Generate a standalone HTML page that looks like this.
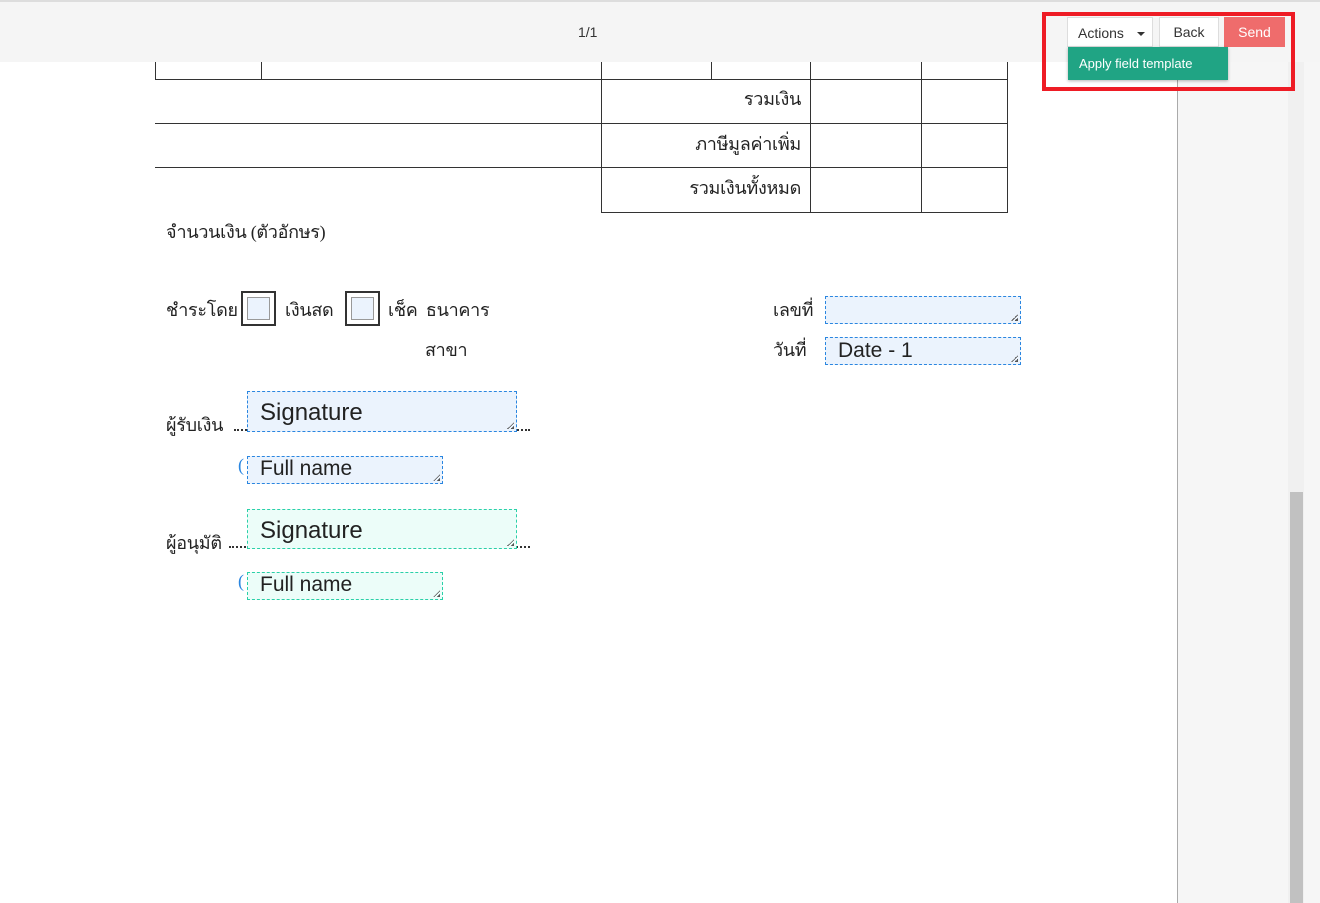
<!DOCTYPE html>
<html><head><meta charset="utf-8"><style>
*{margin:0;padding:0;box-sizing:border-box}
body{width:1320px;height:903px;position:relative;background:#fff;overflow:hidden;font-family:"Liberation Sans","Noto Sans CJK SC",sans-serif}
.a{position:absolute}
.th{font-family:"Liberation Serif","Noto Sans CJK SC",serif;font-size:18px;color:#222;white-space:nowrap;letter-spacing:-0.3px}
.hl{position:absolute;height:1px;background:#333}
.vl{position:absolute;width:1px;background:#333}
.f{position:absolute;border:1px dashed #2a86e0;background:#ebf3fd;font-family:"Liberation Sans",sans-serif;color:#222;padding-left:12px;white-space:nowrap}
.g{border-color:#2ad0a8;background:#ecfdf9}
.f:after{content:"";position:absolute;right:2px;bottom:2px;width:7px;height:7px;background:linear-gradient(135deg,transparent 50%,#555 50%,#555 60%,transparent 60%,transparent 75%,#555 75%)}
.cb{position:absolute;width:35px;height:35px;border:2px solid #333;}
.cb div{position:absolute;left:4px;top:4px;width:23px;height:23px;border:1px solid #999;background:#ebf3fd}
.dots{position:absolute;border-bottom:2px dotted #333;height:1px}
</style></head><body>
<div class="a" style="left:0;top:0;width:1320px;height:2px;background:#ddd"></div>
<div class="a" style="left:0;top:2px;width:1320px;height:60px;background:#f5f5f5"></div>
<div class="a" style="left:1177px;top:62px;width:1px;height:841px;background:#aaa"></div>
<div class="a" style="left:1178px;top:62px;width:142px;height:841px;background:#f6f6f6"></div>
<div class="a" style="left:1288px;top:62px;width:16px;height:841px;background:#f0f0f0"></div>
<div class="a" style="left:1290px;top:492px;width:13px;height:411px;background:#c1c1c1"></div>
<div class="a" style="left:578px;top:24px;font-size:14px;color:#333">1/1</div>

<div class="vl" style="left:155px;top:62px;height:18px"></div>
<div class="vl" style="left:261px;top:62px;height:18px"></div>
<div class="vl" style="left:601px;top:62px;height:151px"></div>
<div class="vl" style="left:711px;top:62px;height:18px"></div>
<div class="vl" style="left:810px;top:62px;height:151px"></div>
<div class="vl" style="left:921px;top:62px;height:151px"></div>
<div class="vl" style="left:1007px;top:62px;height:151px"></div>
<div class="hl" style="left:155px;top:79px;width:853px"></div>
<div class="hl" style="left:155px;top:123px;width:853px"></div>
<div class="hl" style="left:155px;top:167px;width:853px"></div>
<div class="hl" style="left:601px;top:212px;width:407px"></div>
<div class="th a" style="right:519px;top:84px">รวมเงิน</div>
<div class="th a" style="right:519px;top:129px">ภาษีมูลค่าเพิ่ม</div>
<div class="th a" style="right:519px;top:173px">รวมเงินทั้งหมด</div>
<div class="th a" style="left:166px;top:217px">จำนวนเงิน (ตัวอักษร)</div>

<div class="th a" style="left:166px;top:295px">ชำระโดย</div>
<div class="cb" style="left:241px;top:291px"><div></div></div>
<div class="th a" style="left:285px;top:295px">เงินสด</div>
<div class="cb" style="left:345px;top:291px"><div></div></div>
<div class="th a" style="left:388px;top:295px">เช็ค &nbsp;ธนาคาร</div>
<div class="th a" style="left:425px;top:335px">สาขา</div>
<div class="th a" style="left:773px;top:295px">เลขที่</div>
<div class="th a" style="left:773px;top:335px">วันที่</div>
<div class="f" style="left:825px;top:296px;width:196px;height:28px"></div>
<div class="f" style="left:825px;top:337px;width:196px;height:28px;font-size:21px;line-height:25px">Date - 1</div>

<div class="th a" style="left:166px;top:410px">ผู้รับเงิน</div>
<div class="dots" style="left:234px;top:429px;width:296px"></div>
<div class="f" style="left:247px;top:391px;width:270px;height:41px;font-size:24px;line-height:41px">Signature</div>
<div class="th a" style="left:238px;top:455px;color:#2a86e0">(</div>
<div class="f" style="left:247px;top:456px;width:196px;height:28px;font-size:21px;line-height:24px">Full name</div>

<div class="th a" style="left:166px;top:528px">ผู้อนุมัติ</div>
<div class="dots" style="left:229px;top:546px;width:301px"></div>
<div class="f g" style="left:247px;top:509px;width:270px;height:40px;font-size:24px;line-height:41px">Signature</div>
<div class="th a" style="left:238px;top:571px;color:#2a86e0">(</div>
<div class="f g" style="left:247px;top:572px;width:196px;height:28px;font-size:21px;line-height:24px">Full name</div>

<div class="a" style="left:1067px;top:17px;width:86px;height:30px;background:#fff;border:1px solid #ddd;font-size:14px;color:#333;padding:7px 0 0 10px">Actions <span style="display:inline-block;width:0;height:0;border-left:4px solid transparent;border-right:4px solid transparent;border-top:4px solid #333;margin-left:9px;vertical-align:middle"></span></div>
<div class="a" style="left:1159px;top:17px;width:60px;height:30px;background:#fff;border:1px solid #ddd;font-size:14px;color:#333;text-align:center;line-height:28px">Back</div>
<div class="a" style="left:1224px;top:17px;width:61px;height:30px;background:#ef6c6c;font-size:14px;color:#fff;text-align:center;line-height:30px">Send</div>
<div class="a" style="left:1068px;top:47px;width:160px;height:33px;background:#20a484;color:#fff;font-size:13px;padding:9px 0 0 11px;box-shadow:0 1px 3px rgba(0,0,0,.3)">Apply field template</div>
<div class="a" style="left:1042px;top:12px;width:253px;height:79px;border:4px solid #ee1c25"></div>
</body></html>
